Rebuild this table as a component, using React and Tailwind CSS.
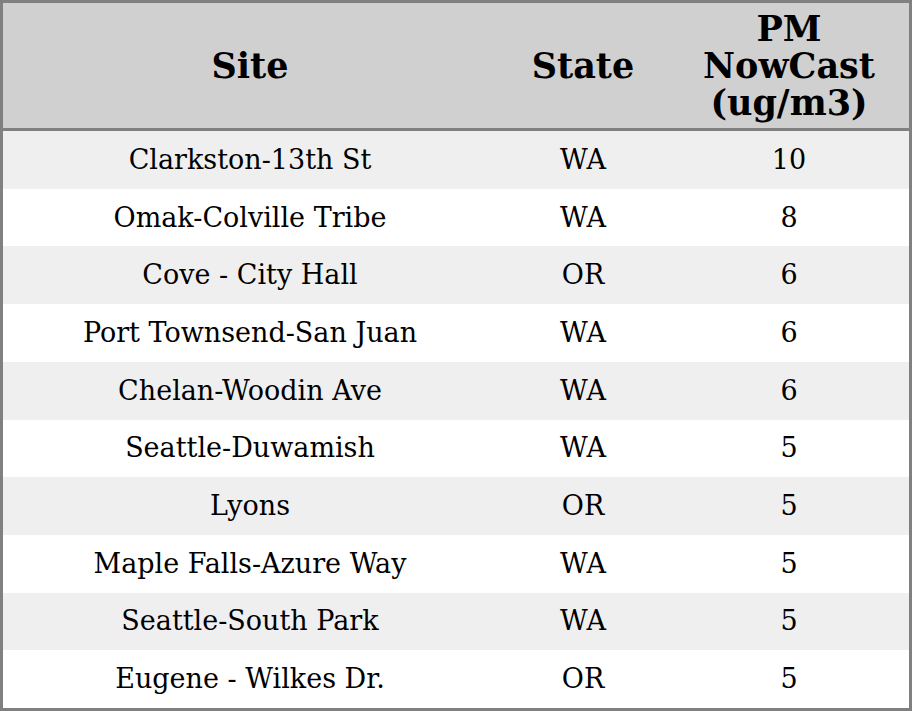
import React from "react";

const rows = [
  ["Clarkston-13th St", "WA", "10"],
  ["Omak-Colville Tribe", "WA", "8"],
  ["Cove - City Hall", "OR", "6"],
  ["Port Townsend-San Juan", "WA", "6"],
  ["Chelan-Woodin Ave", "WA", "6"],
  ["Seattle-Duwamish", "WA", "5"],
  ["Lyons", "OR", "5"],
  ["Maple Falls-Azure Way", "WA", "5"],
  ["Seattle-South Park", "WA", "5"],
  ["Eugene - Wilkes Dr.", "OR", "5"],
];

export default function App() {
  return (
    <div className="w-[912px] h-[711px] flex flex-col border-[3px] border-[#808080] bg-white text-black font-['DejaVu_Serif',serif]">
      {/* header */}
      <div className="flex h-[125px] shrink-0 bg-[#d0d0d0] border-b-[3px] border-[#808080] text-[35px] leading-[37px] font-bold box-content">
        <div className="w-[494px] flex items-center justify-center text-center">Site</div>
        <div className="w-[172px] flex items-center justify-center text-center">State</div>
        <div className="w-[240px] flex items-center justify-center text-center">
          PM
          <br />
          NowCast
          <br />
          (ug/m3)
        </div>
      </div>
      {/* body */}
      <div className="flex-1 flex flex-col text-[27px] leading-[32px]">
        {rows.map(([site, state, pm], i) => (
          <div
            key={site}
            className={`flex-1 flex items-center ${i % 2 === 0 ? "bg-[#efefef]" : "bg-white"}`}
          >
            <div className="w-[494px] text-center">{site}</div>
            <div className="w-[172px] text-center">{state}</div>
            <div className="w-[240px] text-center">{pm}</div>
          </div>
        ))}
      </div>
    </div>
  );
}
